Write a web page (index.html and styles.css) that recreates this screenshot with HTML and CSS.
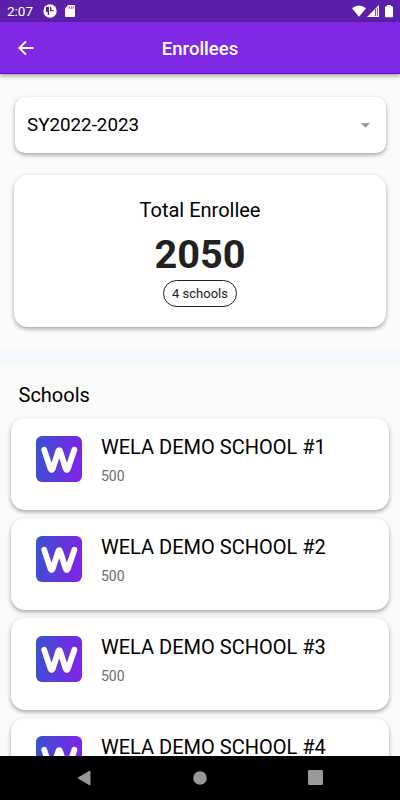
FILE: index.html
```html
<!DOCTYPE html>
<html lang="en">
<head>
    <meta charset="utf-8">
    <title>Enrollees</title>
    <meta name="viewport" content="width=device-width, initial-scale=1.0">
    <link rel="stylesheet" href="styles.css">
</head>
<body>
    <svg width="0" height="0" class="defs">
        <defs>
            <linearGradient id="logoFill" x1="0" y1="0.2" x2="1" y2="0.3">
                <stop offset="0" stop-color="#3950d2"/>
                <stop offset="1" stop-color="#7f25e6"/>
            </linearGradient>
            <symbol id="logo" viewBox="0 0 46 46">
                <rect width="46" height="46" rx="6" fill="url(#logoFill)"/>
                <path d="M8.2 13.8 L14.6 33 Q15.6 35 16.6 33 L22.2 15.5 Q23.2 12.7 24.2 15.5 L29.8 33 Q30.8 35 31.8 33 L38.4 13.8" fill="none" stroke="#fff" stroke-width="5.8" stroke-linecap="round" stroke-linejoin="round"/>
            </symbol>
        </defs>
    </svg>

    <div class="status-bar">
        <span class="time">2:07</span>
        <svg class="status-app" width="14" height="14" viewBox="0 0 14 14">
            <circle cx="7" cy="7" r="6.7" fill="#fff"/>
            <path d="M3 3 H6 V11 H4.8 V8 H3 Z M7 3 H8.3 V6 H10.6 V7.2 H7 Z" fill="#5c1fa9"/>
        </svg>
        <svg class="status-sd" width="10" height="12" viewBox="0 0 10 12">
            <path d="M3.3 0 H9 Q10 0 10 1 V11 Q10 12 9 12 H1 Q0 12 0 11 V3.5 Z" fill="#fff"/>
            <path d="M4.3 1.5 V3.8 M6.3 1.5 V3.8 M8.2 1.5 V3.8" stroke="#5c1fa9" stroke-width="0.8"/>
        </svg>
        <svg class="status-right" width="42" height="13" viewBox="0 0 42 13">
            <path d="M0 3.2 Q7 -2.2 14 3.2 L7 11.7 Z" fill="#fff"/>
            <path d="M15 12 L27 0 V12 Z" fill="#fff"/>
            <path d="M23.5 4 V11 M25.4 3 V11" stroke="#5c1fa9" stroke-width="0.8"/>
            <path d="M35 0 H39 V1.2 H40 Q41 1.2 41 2.2 V11.2 Q41 12.2 40 12.2 H34 Q33 12.2 33 11.2 V2.2 Q33 1.2 34 1.2 H35 Z" fill="#fff"/>
        </svg>
    </div>

    <header class="app-bar">
        <svg class="back" width="16" height="16" viewBox="0 0 16 16">
            <path d="M15.5 8 H1.6 M8 1.3 L1.3 8 L8 14.7" fill="none" stroke="#fff" stroke-width="1.9"/>
        </svg>
        <h1>Enrollees</h1>
    </header>

    <main>
        <div class="year-select">
            <span>SY2022-2023</span>
            <svg width="9" height="5" viewBox="0 0 9 5"><path d="M0 0 H9 L4.5 4.7 Z" fill="#999"/></svg>
        </div>

        <div class="total-card">
            <h2>Total Enrollee</h2>
            <p class="total">2050</p>
            <span class="chip">4 schools</span>
        </div>

        <div class="divider"></div>

        <h2 class="section-title">Schools</h2>
        <div class="school">
            <svg class="logo"><use href="#logo"/></svg>
            <div><h3>WELA DEMO SCHOOL #1</h3><p>500</p></div>
        </div>
        <div class="school">
            <svg class="logo"><use href="#logo"/></svg>
            <div><h3>WELA DEMO SCHOOL #2</h3><p>500</p></div>
        </div>
        <div class="school">
            <svg class="logo"><use href="#logo"/></svg>
            <div><h3>WELA DEMO SCHOOL #3</h3><p>500</p></div>
        </div>
        <div class="school">
            <svg class="logo"><use href="#logo"/></svg>
            <div><h3>WELA DEMO SCHOOL #4</h3></div>
        </div>
    </main>

    <nav class="nav-bar">
        <svg width="14" height="16" viewBox="0 0 14 16"><path d="M13 1 V15 L1 8 Z" fill="#999" stroke="#999" stroke-linejoin="round"/></svg>
        <svg width="14" height="14" viewBox="0 0 14 14"><circle cx="7" cy="7" r="6.8" fill="#999"/></svg>
        <svg width="15" height="15" viewBox="0 0 15 15"><rect width="15" height="15" rx="1.2" fill="#999"/></svg>
    </nav>
</body>
</html>
```
FILE: styles.css
```css
* {box-sizing: border-box;}
body {margin: 0; height: 800px; display: flex; flex-direction: column; overflow: hidden; background-color: #fafafa; color: #000; font-family: Roboto, sans-serif;}
h1, h2, h3, p {margin: 0; font-weight: 400;}
svg {display: block; flex: none;}
.defs {position: absolute;}

.status-bar {flex: none; height: 22px; display: flex; align-items: center; padding: 0 6px 0 7px; background-color: #5c1fa9; color: #fff;}
.time {font-size: 13.5px; width: 36px; white-space: nowrap;}
.status-sd {margin-left: 8px;}
.status-right {margin-left: auto;}

.app-bar {flex: none; height: 52px; display: grid; grid-template-columns: 34px 1fr 34px; align-items: center; background-color: #7f29e5; border-bottom: 1px solid #6a08d8; box-shadow: 0 2px 4px rgba(0, 0, 0, 0.35); color: #fff; z-index: 1;}
.back {justify-self: end;}
.app-bar h1 {font-size: 18.5px; font-weight: 500; line-height: 24px; text-align: center; padding-top: 2px;}

main {flex: 1; min-height: 0; overflow: hidden; padding-top: 23px;}
.year-select {height: 56px; margin: 0 14.5px; padding: 0 16px 0 12.5px; display: flex; align-items: center; justify-content: space-between; background-color: #fff; border-radius: 10px; box-shadow: 0 2px 4px rgba(0, 0, 0, 0.35); font-size: 18.8px;}
.total-card {height: 152px; margin: 22px 14px 0; padding-top: 20.5px; display: flex; flex-direction: column; align-items: center; background-color: #fff; border-radius: 14px; box-shadow: 0 2px 4px rgba(0, 0, 0, 0.35);}
.total-card h2 {font-size: 20px; line-height: 28px;}
.total {font-size: 39.7px; line-height: 48px; font-weight: 700; color: #212121; margin-top: 7px;}
.chip {height: 26.5px; margin-top: 1.5px; padding: 0 8px; border: 1px solid #222; border-radius: 14px; font-size: 13px; line-height: 25px; color: #212121;}
.divider {height: 14px; margin-top: 23px; background-color: #f3f8ff;}
.section-title {margin: 17px 0 0 18.5px; font-size: 20px; line-height: 28px;}

.school {height: 92.5px; margin: 0 11px 7.5px; padding: 18px 24.5px; display: flex; gap: 19.5px; background-color: #fff; border-radius: 14px; box-shadow: 0 2px 4px rgba(0, 0, 0, 0.35);}
.section-title + .school {margin-top: 8.5px;}
.logo {width: 46px; height: 46px;}
.school h3 {font-size: 20px; line-height: 23px;}
.school p {margin-top: 8px; font-size: 14px; line-height: 18px; color: #6b6b6b;}

.nav-bar {flex: none; height: 44.5px; display: flex; align-items: center; justify-content: space-between; padding: 0 77px; background-color: #000;}
```
